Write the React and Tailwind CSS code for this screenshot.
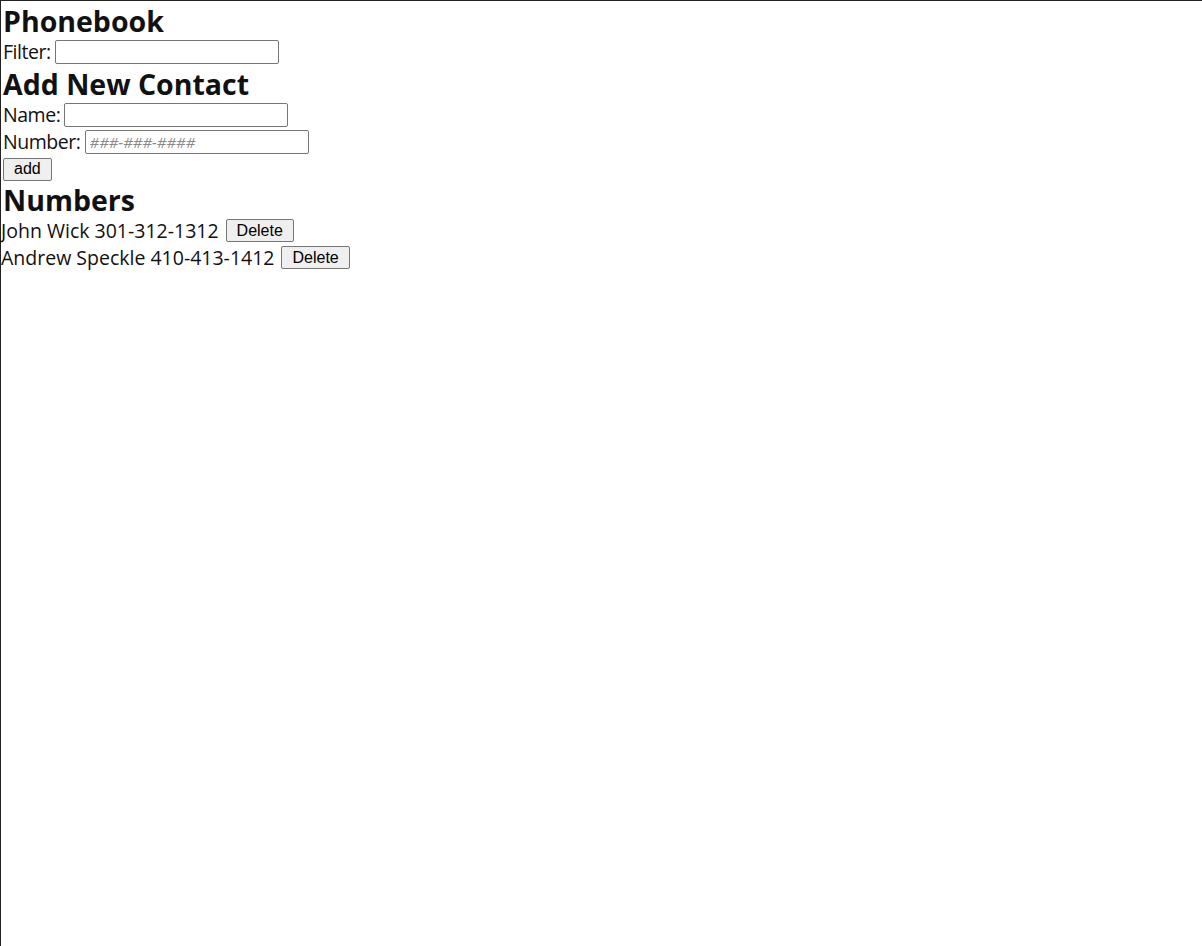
import { useState } from 'react'

const initial = [
  { name: 'John Wick', number: '301-312-1312' },
  { name: 'Andrew Speckle', number: '410-413-1412' },
]

function App() {
  const [persons, setPersons] = useState(initial)
  const [filter, setFilter] = useState('')
  const [name, setName] = useState('')
  const [number, setNumber] = useState('')

  const addPerson = e => {
    e.preventDefault()
    if (!name) return
    setPersons(persons.concat({ name, number }))
    setName('')
    setNumber('')
  }

  const shown = persons.filter(p => p.name.toLowerCase().includes(filter.toLowerCase()))

  const input = 'h-[24px] w-[224px] border border-[#767676] rounded-[2px] px-[4px] text-[15px] italic text-[#111] placeholder:text-[#8a8a8a] bg-white outline-none'
  const button = "h-[23px] px-[10px] border border-[#767676] rounded-[2px] bg-[#efefef] text-[16px] leading-none text-black font-['Liberation_Sans',Arial,sans-serif]"

  return (
    <div className="min-h-[946px] border-t border-l border-[#222] font-['Open_Sans','Noto_Sans',sans-serif] text-[19.5px] text-[#111] pl-[2px]">
      <h2 className="text-[28.5px] font-bold leading-[34px] pt-[3px]">Phonebook</h2>
      <div className="flex items-center gap-[4px] h-[28px]">
        <span className="tracking-[-0.45px]">Filter:</span>
        <input className={input} value={filter} onChange={e => setFilter(e.target.value)} />
      </div>
      <h2 className="text-[28.5px] font-bold leading-[34px] pt-[1px]">Add New Contact</h2>
      <form onSubmit={addPerson}>
        <div className="flex items-center gap-[4px] h-[27px]">
          <span className="tracking-[-0.45px]">Name:</span>
          <input className={input} value={name} onChange={e => setName(e.target.value)} />
        </div>
        <div className="flex items-center gap-[4px] h-[27px]">
          <span className="tracking-[-0.45px]">Number:</span>
          <input className={input} placeholder="###-###-####" value={number} onChange={e => setNumber(e.target.value)} />
        </div>
        <div className="h-[28px] flex items-center">
          <button type="submit" className={button}>add</button>
        </div>
      </form>
      <h2 className="text-[28.5px] font-bold leading-[34px]">Numbers</h2>
      {shown.map(p => (
        <div key={p.name} className="flex items-center gap-[7px] h-[27px] -ml-[2px]">
          {p.name} {p.number}
          <button className={button} onClick={() => setPersons(persons.filter(x => x !== p))}>Delete</button>
        </div>
      ))}
    </div>
  )
}

export default App
